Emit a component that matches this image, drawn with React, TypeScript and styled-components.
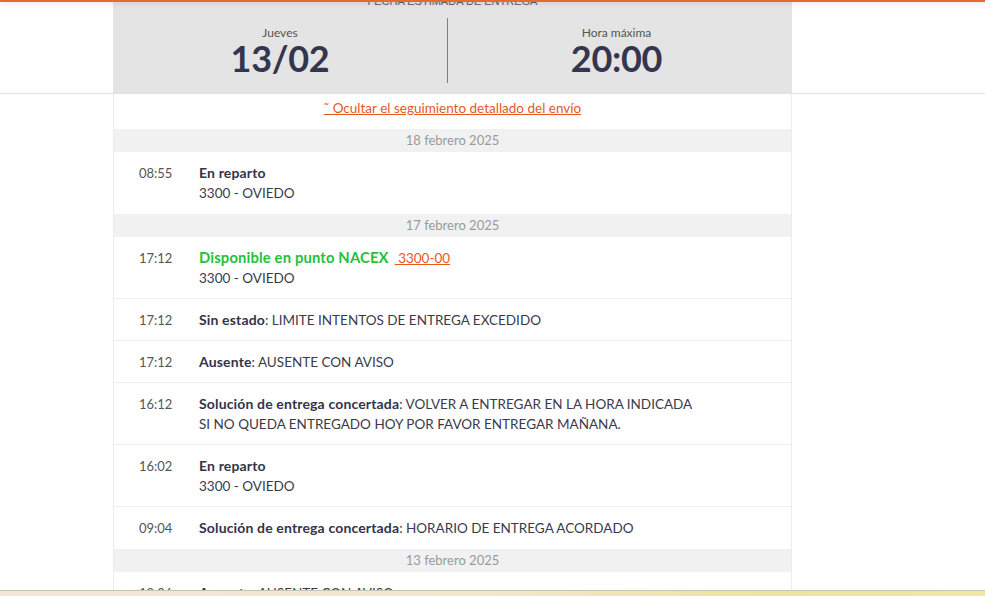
import React from "react";
import styled, { createGlobalStyle } from "styled-components";

const Global = createGlobalStyle`
  html, body { margin: 0; padding: 0; background: #fff; overflow: hidden; }
  body { font-family: Lato, "Noto Sans", "Liberation Sans", sans-serif; color: #333; }
`;

const Page = styled.div`
  position: relative;
  width: 985px;
  height: 596px;
  overflow: hidden;
`;

const TopLine = styled.div`
  position: absolute;
  top: 0;
  left: 0;
  right: 0;
  height: 2px;
  background: #e8692e;
  box-shadow: 0 1px 5px rgba(120, 120, 120, 0.35);
  z-index: 5;
`;

const HeaderBand = styled.div`
  margin-top: -5px;
  border-bottom: 1px solid #e2e2e2;
`;

const EstimatePanel = styled.section`
  margin-left: 113px;
  width: 679px;
  background: #e4e4e4;
  padding: 0 0 10px;
  display: flex;
  flex-direction: column;
  align-items: stretch;
`;

const EstimateLabel = styled.div`
  font-family: "Liberation Sans", Arial, sans-serif;
  font-size: 11px;
  line-height: 12px;
  text-transform: uppercase;
  color: #555;
  text-align: center;
`;

const EstimateRow = styled.div`
  display: flex;
  align-items: center;
  margin-top: 11px;
`;

const EstimateCol = styled.div<{ $w?: number; $pr?: number }>`
  flex: ${(p) => (p.$w ? `0 0 ${p.$w}px` : "1")};
  padding-right: ${(p) => p.$pr ?? 0}px;
  display: flex;
  flex-direction: column;
  align-items: center;
`;

const Divider = styled.div`
  width: 1px;
  height: 65px;
  background: #7a7f8a;
`;

const SmallCaption = styled.div`
  font-size: 12px;
  line-height: 14px;
  color: #555;
`;

const BigValue = styled.div`
  font-size: 36px;
  font-weight: 700;
  line-height: 36px;
  color: #35354f;
  letter-spacing: -0.3px;
`;

const Tracking = styled.section`
  margin-left: 113px;
  width: 677px;
  border-left: 1px solid #ececec;
  border-right: 1px solid #ececec;
  background: #fff;
`;

const ToggleRow = styled.div`
  display: flex;
  justify-content: center;
  padding: 5px 0 12px;
`;

const ToggleLink = styled.a`
  font-size: 13.5px;
  line-height: 18px;
  color: #e8571f;
  text-decoration: underline;
  cursor: pointer;
`;

const DateHeader = styled.div`
  background: #f1f1f1;
  height: 23px;
  line-height: 23px;
  text-align: center;
  font-size: 13px;
  color: #9a9a9a;
`;

const Event = styled.div<{ $last?: boolean }>`
  display: flex;
  align-items: flex-start;
  padding: 11px 0 10px 25px;
  border-bottom: 1px solid ${(p) => (p.$last ? "transparent" : "#eeeeee")};
`;

const Time = styled.div`
  width: 60px;
  flex: none;
  font-size: 13px;
  line-height: 20px;
  color: #555;
`;

const Body = styled.div`
  font-size: 13.5px;
  line-height: 20px;
  color: #3a3a4a;
`;

const Line = styled.div`
  height: 20px;
  white-space: nowrap;
`;

const Title = styled.span<{ $green?: boolean }>`
  font-weight: 700;
  letter-spacing: 0.15px;
  line-height: 14px;
  color: ${(p) => (p.$green ? "#1fc23b" : "#33334a")};
  font-size: ${(p) => (p.$green ? "14.8px" : "14px")};
`;

const PointLink = styled.a`
  color: #e8571f;
  text-decoration: underline;
  margin-left: 6px;
  white-space: pre;
`;

const BottomBar = styled.div`
  position: absolute;
  left: 0;
  right: 0;
  bottom: 0;
  height: 5px;
  border-top: 1px solid #c9c6b0;
  background: linear-gradient(90deg, #f4e6d6 0%, #f2e6cc 50%, #ede59c 78%, #efe7a4 100%);
  z-index: 5;
`;

type Ev = { time: string; title: string; green?: boolean; text?: string; sub?: string; link?: string };

const groups: { date: string; events: Ev[] }[] = [
  { date: "18 febrero 2025", events: [{ time: "08:55", title: "En reparto", sub: "3300 - OVIEDO" }] },
  {
    date: "17 febrero 2025",
    events: [
      { time: "17:12", title: "Disponible en punto NACEX", green: true, link: " 3300-00", sub: "3300 - OVIEDO" },
      { time: "17:12", title: "Sin estado", text: "LIMITE INTENTOS DE ENTREGA EXCEDIDO" },
      { time: "17:12", title: "Ausente", text: "AUSENTE CON AVISO" },
      {
        time: "16:12",
        title: "Solución de entrega concertada",
        text: "VOLVER A ENTREGAR EN LA HORA INDICADA",
        sub: "SI NO QUEDA ENTREGADO HOY POR FAVOR ENTREGAR MAÑANA.",
      },
      { time: "16:02", title: "En reparto", sub: "3300 - OVIEDO" },
      { time: "09:04", title: "Solución de entrega concertada", text: "HORARIO DE ENTREGA ACORDADO" },
    ],
  },
  { date: "13 febrero 2025", events: [{ time: "10:26", title: "Ausente", text: "AUSENTE CON AVISO" }] },
];

export default function App() {
  return (
    <Page>
      <Global />
      <TopLine />
      <HeaderBand>
        <EstimatePanel>
          <EstimateLabel>Fecha estimada de entrega</EstimateLabel>
          <EstimateRow>
            <EstimateCol $w={334}>
              <SmallCaption>Jueves</SmallCaption>
              <BigValue>13/02</BigValue>
            </EstimateCol>
            <Divider />
            <EstimateCol $pr={7}>
              <SmallCaption>Hora máxima</SmallCaption>
              <BigValue>20:00</BigValue>
            </EstimateCol>
          </EstimateRow>
        </EstimatePanel>
      </HeaderBand>
      <Tracking>
        <ToggleRow>
          <ToggleLink>˜ Ocultar el seguimiento detallado del envío</ToggleLink>
        </ToggleRow>
        {groups.map((g) => (
          <div key={g.date}>
            <DateHeader>{g.date}</DateHeader>
            {g.events.map((e, i) => (
              <Event key={i} $last={i === g.events.length - 1}>
                <Time>{e.time}</Time>
                <Body>
                  <Line>
                    <Title $green={e.green}>{e.title}</Title>
                    {e.text ? `: ${e.text}` : null}
                    {e.link ? <PointLink>{e.link}</PointLink> : null}
                  </Line>
                  {e.sub ? <Line>{e.sub}</Line> : null}
                </Body>
              </Event>
            ))}
          </div>
        ))}
      </Tracking>
      <BottomBar />
    </Page>
  );
}
